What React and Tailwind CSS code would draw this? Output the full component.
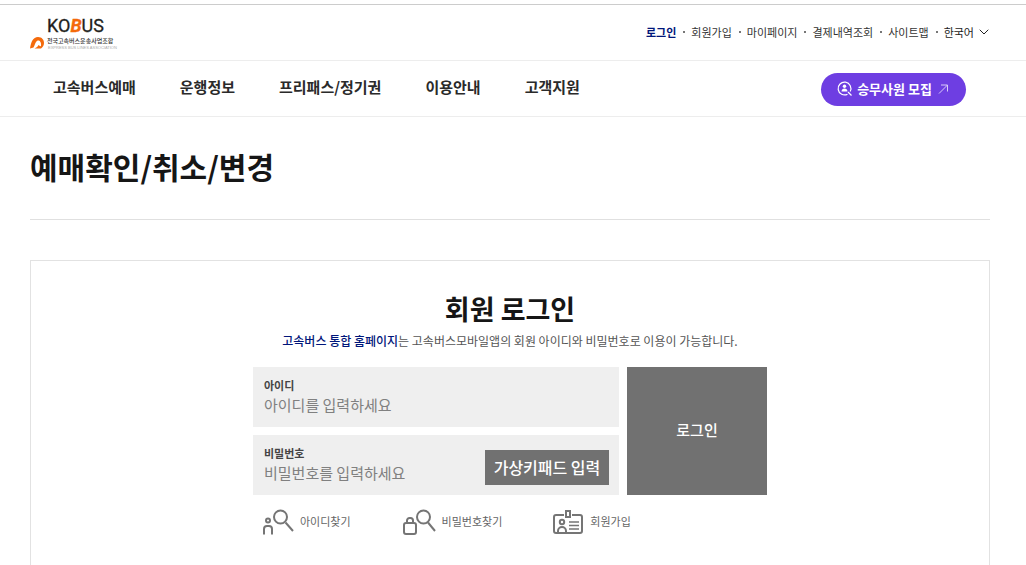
import { ChevronDown } from 'lucide-react';

const utilLinks = ['회원가입', '마이페이지', '결제내역조회', '사이트맵'];
const menus = ['고속버스예매', '운행정보', '프리패스/정기권', '이용안내', '고객지원'];

const Logo = () => (
    <a href="#" aria-label="KOBUS" className="block">
        <svg width="92" height="42" viewBox="0 0 92 42">
            <text x="17" y="20" fontSize="18" fill="#231f20" stroke="#231f20" strokeWidth="0.3" fontFamily="Roboto, sans-serif">
                KO<tspan fill="#f46a0b" stroke="#f46a0b" fontStyle="italic" fontWeight="bold">B</tspan>US
            </text>
            <text x="17" y="31" fontSize="6" fontWeight="500" fill="#333" fontFamily="'Noto Sans CJK KR', sans-serif">전국고속버스운송사업조합</text>
            <text x="18" y="37" fontSize="4" fill="#aaa" fontFamily="'Liberation Sans', sans-serif">EXPRESS BUS LINES ASSOCIATION</text>
            <path
                d="M0 36.500C1 30 3 25 8 25C12 25 14 28 14 31C14 33 13 35 11 36.500H4.500C6.500 35.500 8 34.500 8.500 33C9.500 34 10.500 34.500 11 34C11.500 30.500 10 28.500 8 28.500C5.500 29 5 33 3.500 35.500Z"
                fill="#f46a0b"
            />
        </svg>
    </a>
);

const FindIdIcon = () => (
    <svg width="32" height="27" viewBox="0 0 32 27" fill="none" stroke="#757575" strokeWidth="2">
        <circle cx="18.500" cy="8" r="6.500" />
        <path d="M23.500 13.500L31 22" />
        <circle cx="6" cy="11.500" r="2" />
        <path d="M2 25.500V20a3 3 0 0 1 3-3h2a3 3 0 0 1 3 3v5.500" />
    </svg>
);

const FindPwIcon = () => (
    <svg width="34" height="27" viewBox="0 0 34 27" fill="none" stroke="#757575" strokeWidth="2">
        <circle cx="21.500" cy="8" r="6.500" />
        <path d="M26 13.500L33 22" />
        <rect x="2" y="14" width="12" height="11" rx="2" />
        <path d="M5 14v-2.500a2.500 2.500 0 0 1 2.500-2.500h1a2.500 2.500 0 0 1 2.500 2.500V14" />
    </svg>
);

const JoinIcon = () => (
    <svg width="31" height="27" viewBox="0 0 31 27" fill="none" stroke="#757575" strokeWidth="2">
        <path d="M11 6H3a2 2 0 0 0-2 2v14a2 2 0 0 0 2 2h24a2 2 0 0 0 2-2V8a2 2 0 0 0-2-2h-8" />
        <rect x="13" y="2" width="4" height="6" />
        <circle cx="9" cy="13" r="2.200" />
        <path d="M5 24v-2a4 4 0 0 1 8 0v2" />
        <path d="M16 13h10M16 16.500h10M16 20h10" strokeWidth="1.700" />
    </svg>
);

const RecruitIcon = () => (
    <svg width="16" height="16" viewBox="0 0 16 16" fill="none" stroke="#fff" strokeWidth="1.200">
        <path d="M10.500 13.200A6.400 6.400 0 1 1 13.200 10.500" />
        <path d="M11 11l3.500 3.500" />
        <circle cx="7.500" cy="5.300" r="1.700" fill="#fff" stroke="none" />
        <path d="M4.500 10.500c0-4 6-4 6 0z" fill="#fff" stroke="none" />
    </svg>
);

const Field = ({ id, label, type, placeholder, children }) => (
    <div className="flex h-[60px] items-end bg-[#efefef] pr-[10px] pb-[10px] pl-[11px]">
        <div className="min-w-0 flex-1">
            <label htmlFor={id} className="block text-[11px] leading-4 font-bold text-[#444]">{label}</label>
            <input
                id={id}
                type={type}
                placeholder={placeholder}
                className="block h-6 w-full bg-transparent text-[15px] leading-6 text-[#444] outline-none placeholder:text-[#808080]"
            />
        </div>
        {children}
    </div>
);

const App = () => {
    return (
        <div className="bg-white pt-1 font-['Noto_Sans_CJK_KR',sans-serif] text-[#333]">
            <header className="border-t border-[#ccc]">
                <div className="flex h-14 items-center justify-between border-b border-[#ededed] pr-[34px] pl-[30px]">
                    <Logo />
                    <ul className="flex items-center pb-[2px] text-[11px] leading-4">
                        <li><a href="#" className="font-bold text-[#00167a]">로그인</a></li>
                        {utilLinks.map((name) => (
                            <li key={name} className="flex items-center">
                                <span className="mr-[6px] ml-[7px] size-[2px] bg-[#777]" />
                                <a href="#">{name}</a>
                            </li>
                        ))}
                        <li className="flex items-center">
                            <span className="mr-[6px] ml-[7px] size-[2px] bg-[#777]" />
                            <button type="button" className="flex items-center gap-[2px] text-[#222]">
                                한국어
                                <ChevronDown size={16} strokeWidth={1.5} />
                            </button>
                        </li>
                    </ul>
                </div>
                <div className="flex h-14 items-center justify-between border-b border-[#ededed] pt-px pr-[60px] pl-[53px]">
                    <nav className="flex gap-11 pb-1 text-[15px] leading-6 font-bold text-[#2a2a2a]">
                        {menus.map((name) => (
                            <a key={name} href="#">{name}</a>
                        ))}
                    </nav>
                    <a href="#" className="flex h-[33px] w-[145px] items-center justify-center gap-1 rounded-full bg-[#6e3ee2] text-[13px] font-bold text-white">
                        <RecruitIcon />
                        승무사원 모집
                        <svg width="14" height="12" viewBox="0 0 14 12" fill="none" stroke="#d9ccf8" strokeWidth="1">
                            <path d="M3 10.500L11.500 2M5 2h6.500v6.500" />
                        </svg>
                    </a>
                </div>
            </header>

            <main className="pr-9 pl-[30px]">
                <h1 className="mb-10 flex h-[103px] items-center border-b border-[#e0e0e0] pb-1 text-[30px] leading-10 font-bold text-[#161616]">
                    예매확인/취소/변경
                </h1>

                <section className="border border-[#e2e2e2] pt-7 pb-10">
                    <h2 className="text-center text-[27px] leading-10 font-bold text-[#161616]">회원 로그인</h2>
                    <p className="mt-[2px] text-center text-[12px] leading-5 text-[#555]">
                        <span className="font-medium text-[#00167a]">고속버스 통합 홈페이지</span>는 고속버스모바일앱의 회원 아이디와 비밀번호로 이용이 가능합니다.
                    </p>

                    <form className="mx-auto mt-4 w-full max-w-[514px]">
                        <div className="flex gap-2">
                            <div className="flex flex-1 flex-col gap-2">
                                <Field id="userId" label="아이디" type="text" placeholder="아이디를 입력하세요" />
                                <Field id="userPw" label="비밀번호" type="password" placeholder="비밀번호를 입력하세요">
                                    <button type="button" className="h-[35px] w-[124px] bg-[#717171] pb-[2px] text-[16px] font-medium text-white">
                                        가상키패드 입력
                                    </button>
                                </Field>
                            </div>
                            <button type="submit" className="w-[140px] bg-[#717171] pb-[2px] text-[15px] font-medium text-white">로그인</button>
                        </div>
                    </form>

                    <ul className="mx-auto mt-[14px] flex w-full max-w-[514px] gap-[51px] pl-[9px] text-[11px] leading-6 text-[#666]">
                        <li>
                            <a href="#" className="flex items-start gap-[6px]"><FindIdIcon />아이디찾기</a>
                        </li>
                        <li>
                            <a href="#" className="flex items-start gap-[6px]"><FindPwIcon />비밀번호찾기</a>
                        </li>
                        <li>
                            <a href="#" className="flex items-start gap-[6px]"><JoinIcon />회원가입</a>
                        </li>
                    </ul>
                </section>
            </main>
        </div>
    );
};

export default App;
